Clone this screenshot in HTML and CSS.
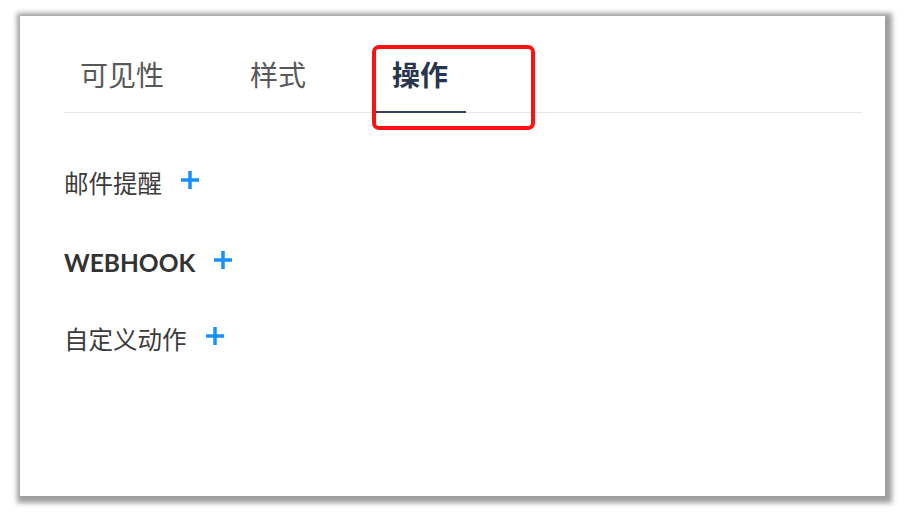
FILE: index.html
```html
<!DOCTYPE html>
<html lang="zh-CN">
  <head>
    <meta charset="UTF-8" />
    <meta name="viewport" content="width=device-width, initial-scale=1.0" />
    <title>操作</title>
    <link rel="stylesheet" href="styles.css">
  </head>
  <body>
    <div class="panel">
      <div class="tabs">
        <div class="tab">可见性</div>
        <div class="tab">样式</div>
        <div class="tab active">操作</div>
        <div class="mark"></div>
      </div>

      <div class="list">
        <div class="item">
          <span>邮件提醒</span>
          <svg class="plus" viewBox="0 0 20 20"><path d="M10 1v18M1 10h18" /></svg>
        </div>
        <div class="item hook">
          <span>WEBHOOK</span>
          <svg class="plus" viewBox="0 0 20 20"><path d="M10 1v18M1 10h18" /></svg>
        </div>
        <div class="item">
          <span>自定义动作</span>
          <svg class="plus" viewBox="0 0 20 20"><path d="M10 1v18M1 10h18" /></svg>
        </div>
      </div>
    </div>
  </body>
</html>
```
FILE: styles.css
```css
* {
  margin: 0;
  padding: 0;
  box-sizing: border-box;
}
body {
  background-color: white;
  font-family: Lato, "Noto Sans CJK SC", sans-serif;
  padding: 16px 20px 17px 20px;
}
.panel {
  width: 865px;
  height: 480px;
  background-color: white;
  box-shadow: 2px 2px 5px 5px rgba(0, 0, 0, 0.38);
  padding: 40px 23px 0 44px;
}
.tabs {
  position: relative;
  display: flex;
  gap: 54px;
  border-bottom: 1px solid rgb(230, 230, 230);
}
.tab {
  font-size: 28px;
  line-height: 38px;
  padding: 0 16px 17px 16px;
  color: rgb(88, 88, 88);
  margin-bottom: -1px;
  border-bottom: 2px solid transparent;
}
.tab.active {
  color: rgb(41, 52, 79);
  font-weight: bold;
  padding: 0 18px 17px 16px;
  border-bottom-color: rgb(52, 66, 96);
}
/* red annotation box */
.mark {
  position: absolute;
  left: 308px;
  top: -11px;
  width: 163px;
  height: 85px;
  border: 4px solid rgb(255, 17, 17);
  border-radius: 7px;
}
.list {
  margin-top: 53px;
  display: flex;
  flex-direction: column;
  gap: 46px;
}
.item {
  display: flex;
  align-items: center;
  height: 32px;
  font-size: 24.5px;
  color: rgb(60, 60, 60);
}
.item.hook {
  font-weight: bold;
  color: rgb(51, 51, 51);
  margin-top: 2px;
  margin-bottom: -2px;
}
.plus {
  width: 20px;
  height: 20px;
  margin-left: 18px;
  margin-top: -4px;
  fill: none;
  stroke: rgb(24, 144, 255);
  stroke-width: 3.5;
}
```
